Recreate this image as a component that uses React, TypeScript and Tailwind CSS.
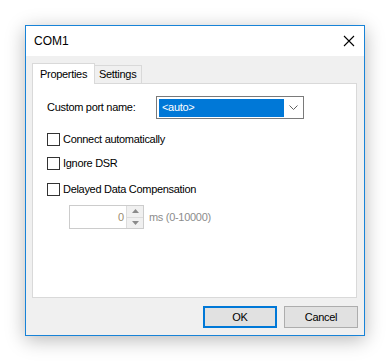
import React from "react";

const font = { fontFamily: '"Liberation Sans", Arial, sans-serif' };

function CheckRow({ label, className = "" }: { label: string; className?: string }) {
  return (
    <div className={`flex items-center h-[13px] ${className}`}>
      <div className="w-[13px] h-[13px] border border-[#333333] bg-white shrink-0" />
      <span className="ml-[3px] text-[11px] tracking-[-0.3px] text-black leading-none">{label}</span>
    </div>
  );
}

export default function App() {
  return (
    <div className="w-[390px] h-[361px] bg-white pt-[25px] pl-[25px]" style={font}>
      <div className="w-[340px] h-[311px] border border-[#1883d7] bg-[#f0f0f0] flex flex-col shadow-[0_4px_18px_rgba(0,0,0,0.28)]">
        {/* Title bar */}
        <div className="h-[30px] bg-white flex items-center justify-between pl-[8px] pr-[9px] shrink-0">
          <span className="text-[12px] text-black">COM1</span>
          <svg width="12" height="12" viewBox="0 0 12 12">
            <path d="M1 1 L11 11 M11 1 L1 11" stroke="#000" strokeWidth="1.1" />
          </svg>
        </div>

        {/* Tabs + panel */}
        <div className="pl-[6px] pr-[7px] pt-[7px]">
          <div className="flex items-end h-[20px] relative z-10">
            <div className="h-[21px] w-[63px] bg-white border border-b-0 border-[#d9d9d9] flex items-center pl-[7px] -mb-[1px]">
              <span className="text-[11px] tracking-[-0.3px] text-black">Properties</span>
            </div>
            <div className="h-[19px] w-[47px] bg-[#f0f0f0] border border-l-0 border-[#d9d9d9] flex items-center pl-[4px] -mb-[1px]">
              <span className="text-[11px] tracking-[-0.3px] text-black">Settings</span>
            </div>
          </div>
          <div className="h-[215px] bg-white border border-[#d9d9d9] pl-[14px] pt-[12px]">
            <div className="flex items-center h-[23px]">
              <span className="w-[109px] text-[11px] tracking-[-0.3px] text-black">Custom port name:</span>
              <div className="w-[148px] h-[23px] border border-[#7a7a7a] bg-white flex items-center pl-[2px] pr-[5px]">
                <div className="w-[125px] h-[18px] bg-[#0078d7] flex items-center pl-[3px]">
                  <span className="text-[11px] tracking-[-0.3px] text-white">&lt;auto&gt;</span>
                </div>
                <div className="flex-1 flex justify-end">
                  <svg width="9" height="5" viewBox="0 0 9 5">
                    <path d="M0.5 0.5 L4.5 4.5 L8.5 0.5" fill="none" stroke="#606060" strokeWidth="1" />
                  </svg>
                </div>
              </div>
            </div>
            <CheckRow label="Connect automatically" className="mt-[14px]" />
            <CheckRow label="Ignore DSR" className="mt-[11px]" />
            <CheckRow label="Delayed Data Compensation" className="mt-[13px]" />
            <div className="flex items-center mt-[9px] ml-[22px]">
              <div className="w-[75px] h-[24px] border border-[#cccccc] bg-white flex items-stretch">
                <div className="flex-1 flex items-center justify-end pr-[2px]">
                  <span className="text-[11px] text-[#9a8a70]">0</span>
                </div>
                <div className="w-[17px] flex flex-col border-l border-[#dcdcdc]">
                  <div className="flex-1 bg-[#f0f0f0] border-b border-[#dcdcdc] flex items-center justify-center">
                    <svg width="7" height="4" viewBox="0 0 7 4">
                      <path d="M0 4 L3.5 0 L7 4 Z" fill="#8a8a8a" />
                    </svg>
                  </div>
                  <div className="flex-1 bg-[#f0f0f0] flex items-center justify-center">
                    <svg width="7" height="4" viewBox="0 0 7 4">
                      <path d="M0 0 L3.5 4 L7 0 Z" fill="#8a8a8a" />
                    </svg>
                  </div>
                </div>
              </div>
              <span className="ml-[5px] text-[11px] tracking-[-0.3px] text-[#8c8c8c]">ms (0-10000)</span>
            </div>
          </div>
        </div>

        {/* Buttons */}
        <div className="flex justify-end gap-[7px] pr-[6px] mt-[8px]">
          <button className="w-[74px] h-[22px] border-2 border-[#0078d7] bg-[#e1e1e1] text-[11px] tracking-[-0.3px] text-black flex items-center justify-center">
            OK
          </button>
          <button className="w-[74px] h-[22px] border border-[#adadad] bg-[#e1e1e1] text-[11px] tracking-[-0.3px] text-black flex items-center justify-center">
            Cancel
          </button>
        </div>
      </div>
    </div>
  );
}
